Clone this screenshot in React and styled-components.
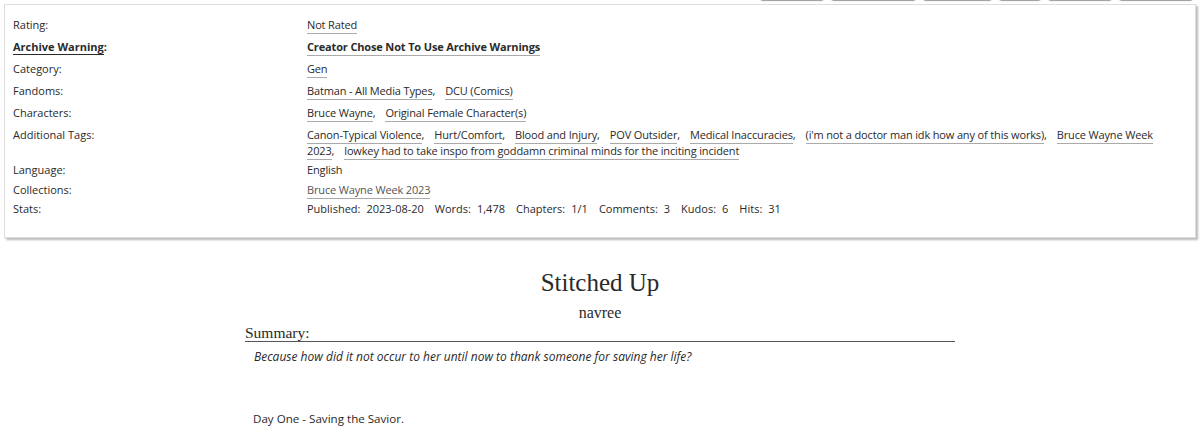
import React from "react";
import styled, { createGlobalStyle } from "styled-components";

const GlobalStyle = createGlobalStyle`
  body {
    margin: 0;
    background: #fff;
    color: #2a2a2a;
    font-family: "Open Sans", "DejaVu Sans", sans-serif;
    font-size: 11px;
  }
`;

const Page = styled.div`
  padding: 0 4px;
`;

const NavBar = styled.ul`
  display: flex;
  justify-content: flex-end;
  gap: 7px;
  list-style: none;
  margin: -22px 3px 4px 0;
  padding: 0;
  height: 22px;
`;

const NavButton = styled.li`
  width: ${(p) => p.w - 2}px;
  height: 20px;
  border: 1px solid #bbb;
  border-radius: 3px;
  background: #eee;
  box-shadow: 0 1px 1px #999;
`;

const MetaBox = styled.dl`
  margin: 0;
  padding: 12px 8px 20px 8px;
  border: 1px solid #ddd;
  box-shadow: 2px 2px 2px #bbb;
`;

const Row = styled.div`
  display: grid;
  grid-template-columns: 294px 1fr;
  margin-bottom: ${(p) => p.gap}px;
  line-height: 16px;
`;

const Label = styled.dt`
  margin: 0;
  font-weight: ${(p) => (p.strong ? "bold" : "normal")};
  span {
    border-bottom: 1px solid #2a2a2a;
  }
`;

const Value = styled.dd`
  margin: 0;
  font-weight: ${(p) => (p.strong ? "bold" : "normal")};
  letter-spacing: -0.15px;
`;

const TagList = styled.ul`
  list-style: none;
  margin: 0;
  padding: 0;
  display: inline;
`;

const TagItem = styled.li`
  display: inline;
  &:not(:last-child)::after {
    content: ",";
    margin-right: 10px;
  }
`;

const Tag = styled.a`
  color: ${(p) => (p.muted ? "#555" : "#2a2a2a")};
  text-decoration: none;
  border-bottom: 1px solid #aaa;
  padding-bottom: 1px;
`;

const Stats = styled.dl`
  display: inline;
  margin: 0;
  letter-spacing: 0;
  dt,
  dd {
    display: inline;
    margin: 0;
  }
  dt::after {
    content: ":";
    margin-right: 6px;
  }
  dd {
    margin-right: 11px;
  }
`;

const WorkHeader = styled.div`
  width: 710px;
  margin: 30px auto 0;
  font-family: "Liberation Serif", "DejaVu Serif", serif;
`;

const Title = styled.h2`
  margin: 0;
  text-align: center;
  font-weight: normal;
  font-size: 25px;
  line-height: 30px;
`;

const Byline = styled.h3`
  margin: 6px 0 0;
  text-align: center;
  font-weight: normal;
  font-size: 16px;
  line-height: 18px;
`;

const SummaryHeading = styled.h3`
  margin: 3px 0 0;
  font-weight: normal;
  font-size: 15.5px;
  line-height: 16px;
  border-bottom: 1px solid #555;
`;

const SummaryText = styled.blockquote`
  margin: 6px 0 0 9px;
  font-family: "Open Sans", "DejaVu Sans", sans-serif;
  font-style: italic;
  font-size: 12px;
`;

const ChapterText = styled.p`
  width: 702px;
  margin: 46px auto 0;
  padding-left: 8px;
  font-size: 11.6px;
`;

const navWidths = [64, 85, 69, 42, 64, 74];

const meta = [
  { label: "Rating:", tags: ["Not Rated"], gap: 6 },
  {
    label: "Archive Warning:",
    tags: ["Creator Chose Not To Use Archive Warnings"],
    strong: true,
    gap: 6,
  },
  { label: "Category:", tags: ["Gen"], gap: 6 },
  { label: "Fandoms:", tags: ["Batman - All Media Types", "DCU (Comics)"], gap: 6 },
  {
    label: "Characters:",
    tags: ["Bruce Wayne", "Original Female Character(s)"],
    gap: 6,
  },
  {
    label: "Additional Tags:",
    tags: [
      "Canon-Typical Violence",
      "Hurt/Comfort",
      "Blood and Injury",
      "POV Outsider",
      "Medical Inaccuracies",
      "(i'm not a doctor man idk how any of this works)",
      "Bruce Wayne Week 2023",
      "lowkey had to take inspo from goddamn criminal minds for the inciting incident",
    ],
    gap: 3,
  },
];

const stats = [
  ["Published", "2023-08-20"],
  ["Words", "1,478"],
  ["Chapters", "1/1"],
  ["Comments", "3"],
  ["Kudos", "6"],
  ["Hits", "31"],
];

export default function App() {
  return (
    <Page>
      <GlobalStyle />
      <NavBar>
        {navWidths.map((w, i) => (
          <NavButton key={i} w={w} />
        ))}
      </NavBar>
      <MetaBox>
        {meta.map((row) => (
          <Row key={row.label} gap={row.gap}>
            <Label strong={row.strong}>
              {row.strong ? <span>{row.label.slice(0, -1)}</span> : row.label.slice(0, -1)}:
            </Label>
            <Value strong={row.strong}>
              <TagList>
                {row.tags.map((t) => (
                  <TagItem key={t}>
                    <Tag href="#">{t}</Tag>
                  </TagItem>
                ))}
              </TagList>
            </Value>
          </Row>
        ))}
        <Row gap={4}>
          <Label>Language:</Label>
          <Value>English</Value>
        </Row>
        <Row gap={3}>
          <Label>Collections:</Label>
          <Value>
            <Tag href="#" muted>
              Bruce Wayne Week 2023
            </Tag>
          </Value>
        </Row>
        <Row gap={0}>
          <Label>Stats:</Label>
          <Value>
            <Stats>
              {stats.map(([k, v]) => (
                <React.Fragment key={k}>
                  <dt>{k}</dt>
                  <dd>{v}</dd>
                </React.Fragment>
              ))}
            </Stats>
          </Value>
        </Row>
      </MetaBox>
      <WorkHeader>
        <Title>Stitched Up</Title>
        <Byline>navree</Byline>
        <SummaryHeading>Summary:</SummaryHeading>
        <SummaryText>
          Because how did it not occur to her until now to thank someone for saving her life?
        </SummaryText>
      </WorkHeader>
      <ChapterText>Day One - Saving the Savior.</ChapterText>
    </Page>
  );
}
